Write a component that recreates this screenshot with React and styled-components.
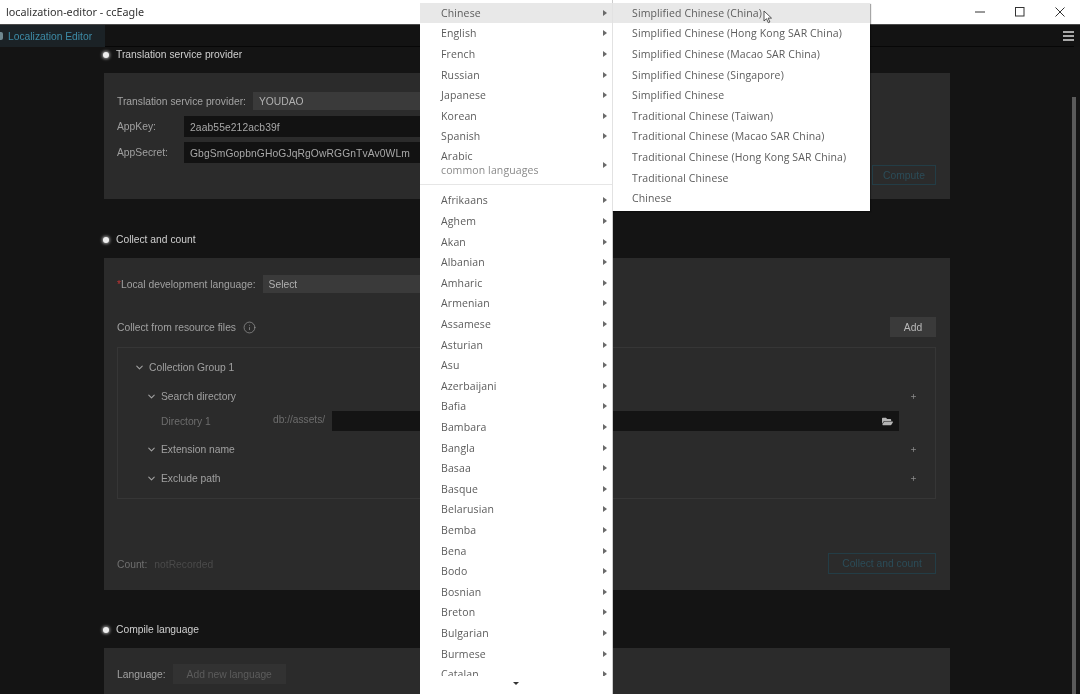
import React from "react";
import styled, { createGlobalStyle } from "styled-components";
import { ChevronDown, Info, Plus as PlusIcon } from "lucide-react";
import { FaFolderOpen } from "react-icons/fa";

const Global = createGlobalStyle`
  html, body { margin: 0; padding: 0; height: 694px; overflow: hidden; background: #141414; }
  * { box-sizing: border-box; }
`;

const Page = styled.div`
  position: relative;
  width: 1080px;
  height: 694px;
  overflow: hidden;
  display: flex;
  flex-direction: column;
  font-family: "Liberation Sans", Arial, sans-serif;
  font-size: 10.3px;
  color: #b4b4b4;
  background: #141414;
  filter: blur(0.45px);
`;

/* ---------- window chrome ---------- */
const TitleBar = styled.header`
  height: 25px;
  flex: none;
  background: #fff;
  display: flex;
  align-items: center;
  justify-content: space-between;
  padding: 0 0 1px 6px;
  border-bottom: 1px solid #4a4a4a;
`;
const TitleText = styled.span`
  font-family: "Noto Sans", sans-serif;
  font-size: 10.8px;
  color: #333;
`;
const WindowControls = styled.div`
  display: flex;
`;
const WindowButton = styled.div`
  width: 40px;
  height: 24px;
  display: flex;
  align-items: center;
  justify-content: center;
  svg { display: block; }
`;
const TabBar = styled.nav`
  height: 22px;
  flex: none;
  display: flex;
  align-items: stretch;
  justify-content: space-between;
  background: #131313;
  padding-right: 6px;
`;
const Tab = styled.div`
  width: 105px;
  padding-left: 8px;
  display: flex;
  align-items: center;
  background: #1b2226;
  color: #3d8ba6;
  white-space: nowrap;
  position: relative;
  &::before {
    content: "";
    position: absolute;
    left: -4px;
    top: 7px;
    width: 7px;
    height: 8px;
    border-radius: 2px;
    background: #6f8890;
  }
`;
const TabRest = styled.div`
  flex: 1;
  display: flex;
  justify-content: flex-end;
  align-items: flex-start;
  padding-top: 6px;
  border-bottom: 1px solid #070707;
`;
const Burger = styled.div`
  width: 11px;
  height: 10px;
  border-top: 2px solid #a8a8a8;
  border-bottom: 2px solid #a8a8a8;
  position: relative;
  &::after {
    content: "";
    position: absolute;
    left: 0; right: 0; top: 2px;
    height: 2px;
    background: #a8a8a8;
  }
`;
const Scrollbar = styled.div`
  position: absolute;
  left: 1072px;
  top: 97px;
  bottom: 0;
  width: 4px;
  background: #5a5a5a;
`;

/* ---------- main ---------- */
const Content = styled.main`
  flex: 1;
  min-height: 0;
  padding: 0 130px 0 104px;
  overflow: hidden;
`;
const SectionHead = styled.h2`
  margin: ${(p) => p.$top}px 0 11px;
  height: 15px;
  padding-top: 1px;
  display: flex;
  align-items: center;
  gap: 7px;
  font-size: 10.3px;
  font-weight: normal;
  line-height: 14px;
  color: #cfcfcf;
  &::before {
    content: "";
    width: 6px;
    height: 6px;
    margin-left: -1px;
    border-radius: 50%;
    background: #eee;
    box-shadow: 0 0 3px 1px rgba(255,255,255,.55);
  }
`;
const Panel = styled.section`
  height: ${(p) => p.$h}px;
  background: #2b2b2b;
  padding: ${(p) => p.$pad || 19}px 14px 0 13px;
`;
const Row = styled.div`
  display: flex;
  align-items: center;
  height: ${(p) => p.$h}px;
  margin-top: ${(p) => p.$mt || 0}px;
`;
const Label = styled.label`
  width: ${(p) => (p.$w ? `${p.$w}px` : "auto")};
  flex: none;
  color: ${(p) => p.$color || "#a0a0a0"};
  white-space: nowrap;
`;
const Req = styled.span`
  color: #b33;
`;
const Select = styled.div`
  width: 300px;
  height: 18px;
  margin-left: ${(p) => p.$ml}px;
  padding-left: 6px;
  background: #3a3a3a;
  color: #b0b0b0;
  display: flex;
  align-items: center;
`;
const Input = styled.div`
  width: 380px;
  height: 21px;
  padding: 1px 0 0 6px;
  background: #121212;
  color: #a8a8a8;
  display: flex;
  align-items: center;
  letter-spacing: .1px;
`;
const RightAction = styled.div`
  display: flex;
  justify-content: flex-end;
  padding-top: 2px;
`;
const GhostButton = styled.button`
  width: ${(p) => p.$w}px;
  height: 20px;
  padding: 0;
  background: transparent;
  border: 1px solid #233d46;
  color: #2b4c58;
  font: inherit;
`;
const SolidButton = styled.button`
  width: 46px;
  height: 20px;
  padding: 0;
  margin-left: auto;
  border: 0;
  background: #3a3a3a;
  color: #b8b8b8;
  font: inherit;
`;
const Help = styled.span`
  margin-left: 7px;
  display: inline-flex;
  color: #a0a0a0;
`;
const Group = styled.div`
  height: 152px;
  margin-top: 10px;
  border: 1px solid #363636;
  padding-top: 12px;
`;
const TreeRow = styled.div`
  display: flex;
  align-items: center;
  height: 14px;
  margin-top: ${(p) => p.$mt || 0}px;
  padding-left: ${(p) => p.$indent}px;
  padding-right: 18px;
  color: #a0a0a0;
  gap: 4px;
  svg { flex: none; color: #a0a0a0; }
`;
const Plus = styled.span`
  margin-left: auto;
  display: inline-flex;
  svg { color: #8f8f8f; }
`;
const DirRow = styled.div`
  display: flex;
  align-items: center;
  height: 20px;
  margin-top: 8px;
  padding-left: 43px;
  color: #6d6d6d;
`;
const DirName = styled.span`
  width: 112px;
  flex: none;
`;
const DirPrefix = styled.span`
  width: 59px;
  flex: none;
  font-size: 10.2px;
  position: relative;
  top: -2px;
`;
const DirInput = styled.div`
  width: 567px;
  height: 20px;
  background: #141414;
  display: flex;
  align-items: center;
  justify-content: flex-end;
  padding-right: 6px;
  color: #b5b5b5;
`;
const CountRow = styled.div`
  display: flex;
  align-items: center;
  height: 21px;
  margin-top: 54px;
  color: #6f6f6f;
`;
const CountText = styled.span`
  padding-top: 2px;
`;
const CountValue = styled(CountText)`
  margin-left: 7px;
  color: #4a4a4a;
`;
const LastButton = styled(GhostButton)`
  height: 21px;
  margin-left: auto;
`;
const AddLang = styled.button`
  width: 113px;
  height: 20px;
  margin-left: 7px;
  border: 0;
  padding: 0;
  background: #323232;
  color: #5c5c5c;
  font: inherit;
`;

/* ---------- context menus ---------- */
const Menu = styled.div`
  position: absolute;
  background: #fff;
  font-family: "Open Sans", sans-serif;
  font-size: 10.5px;
  color: #5c5c5c;
  letter-spacing: .12px;
`;
const MainMenu = styled(Menu)`
  left: 420px;
  top: 0;
  bottom: 0;
  width: 193px;
  padding-top: 2.6px;
  border-right: 1px solid #ccc;
  display: flex;
  flex-direction: column;
`;
const SubMenu = styled(Menu)`
  left: 612px;
  top: 2.6px;
  width: 258px;
  height: 208px;
  border-left: 1px solid #e2e2e2;
  box-shadow: 1px 1px 1px rgba(0,0,0,.35);
`;
const MenuList = styled.div`
  flex: 1;
  min-height: 0;
  overflow: hidden;
`;
const Item = styled.div`
  height: ${(p) => (p.$tall ? 37.4 : 20.6)}px;
  padding-left: ${(p) => p.$pl}px;
  padding-right: 5px;
  display: flex;
  align-items: center;
  justify-content: space-between;
  background: ${(p) => (p.$on ? "#e8e8e8" : "transparent")};
  white-space: nowrap;
  line-height: 14px;
`;
const Arrow = styled.span`
  width: 0;
  height: 0;
  border-left: 4px solid #6a6a6a;
  border-top: 3px solid transparent;
  border-bottom: 3px solid transparent;
`;
const TwoLine = styled.span`
  position: relative;
  top: -2px;
`;
const Muted = styled.span`
  display: block;
  color: #8a8a8a;
`;
const Separator = styled.div`
  height: 1px;
  margin: 0 0 5px;
  background: #e6e6e6;
`;
const ScrollDown = styled.div`
  height: 18px;
  flex: none;
  display: flex;
  justify-content: center;
  padding-top: 6px;
  &::after {
    content: "";
    width: 0;
    height: 0;
    border-top: 3px solid #333;
    border-left: 3px solid transparent;
    border-right: 3px solid transparent;
  }
`;
const Cursor = styled.svg`
  position: absolute;
  left: 763px;
  top: 10px;
`;

const common = ["Chinese", "English", "French", "Russian", "Japanese", "Korean", "Spanish"];
const others = ["Afrikaans", "Aghem", "Akan", "Albanian", "Amharic", "Armenian", "Assamese", "Asturian", "Asu", "Azerbaijani", "Bafia", "Bambara", "Bangla", "Basaa", "Basque", "Belarusian", "Bemba", "Bena", "Bodo", "Bosnian", "Breton", "Bulgarian", "Burmese", "Catalan"];
const variants = ["Simplified Chinese (China)", "Simplified Chinese (Hong Kong SAR China)", "Simplified Chinese (Macao SAR China)", "Simplified Chinese (Singapore)", "Simplified Chinese", "Traditional Chinese (Taiwan)", "Traditional Chinese (Macao SAR China)", "Traditional Chinese (Hong Kong SAR China)", "Traditional Chinese", "Chinese"];

const Chevron = () => <ChevronDown size={11} strokeWidth={2.4} />;
const Add = () => <Plus><PlusIcon size={7} strokeWidth={2.5} /></Plus>;

export default function App() {
  return (
    <Page>
      <Global />
      <TitleBar>
        <TitleText>localization-editor - ccEagle</TitleText>
        <WindowControls>
          <WindowButton>
            <svg width="10" height="10" viewBox="0 0 10 10"><path d="M0 5h10" stroke="#333" strokeWidth="1" /></svg>
          </WindowButton>
          <WindowButton>
            <svg width="10" height="10" viewBox="0 0 10 10"><rect x=".5" y=".5" width="8.5" height="8.5" fill="none" stroke="#333" strokeWidth="1" /></svg>
          </WindowButton>
          <WindowButton>
            <svg width="10" height="10" viewBox="0 0 10 10"><path d="M.5.5l9 9M9.5.5l-9 9" stroke="#333" strokeWidth="1" /></svg>
          </WindowButton>
        </WindowControls>
      </TitleBar>
      <TabBar>
        <Tab>Localization Editor</Tab>
        <TabRest><Burger /></TabRest>
      </TabBar>
      <Content>
        <SectionHead $top={0}>Translation service provider</SectionHead>
        <Panel $h={126}>
          <Row $h={18}>
            <Label $color="#a3a3a3">Translation service provider:</Label>
            <Select $ml={7}>YOUDAO</Select>
          </Row>
          <Row $h={21} $mt={6}>
            <Label $w={67}>AppKey:</Label>
            <Input>2aab55e212acb39f</Input>
          </Row>
          <Row $h={21} $mt={5}>
            <Label $w={67}>AppSecret:</Label>
            <Input>GbgSmGopbnGHoGJqRgOwRGGnTvAv0WLm</Input>
          </Row>
          <RightAction>
            <GhostButton $w={64}>Compute</GhostButton>
          </RightAction>
        </Panel>

        <SectionHead $top={33}>Collect and count</SectionHead>
        <Panel $h={332} $pad={17}>
          <Row $h={18}>
            <Label><Req>*</Req>Local development language:</Label>
            <Select $ml={7}>Select</Select>
          </Row>
          <Row $h={20} $mt={24}>
            <Label>Collect from resource files</Label>
            <Help><Info size={13} strokeWidth={1.2} /></Help>
            <SolidButton>Add</SolidButton>
          </Row>
          <Group>
            <TreeRow $indent={16}><Chevron />Collection Group 1</TreeRow>
            <TreeRow $indent={28} $mt={15}><Chevron />Search directory<Add /></TreeRow>
            <DirRow>
              <DirName>Directory 1</DirName>
              <DirPrefix>db://assets/</DirPrefix>
              <DirInput><FaFolderOpen size={11} /></DirInput>
            </DirRow>
            <TreeRow $indent={28} $mt={11}><Chevron />Extension name<Add /></TreeRow>
            <TreeRow $indent={28} $mt={15}><Chevron />Exclude path<Add /></TreeRow>
          </Group>
          <CountRow>
            <CountText>Count:</CountText>
            <CountValue>notRecorded</CountValue>
            <LastButton $w={108}>Collect and count</LastButton>
          </CountRow>
        </Panel>

        <SectionHead $top={32}>Compile language</SectionHead>
        <Panel $h={46} $pad={16}>
          <Row $h={20}>
            <Label>Language:</Label>
            <AddLang>Add new language</AddLang>
          </Row>
        </Panel>
      </Content>
      <Scrollbar />

      <MainMenu>
        <MenuList>
          {common.map((name, i) => (
            <Item key={name} $pl={21} $on={i === 0}>{name}<Arrow /></Item>
          ))}
          <Item $pl={21} $tall>
            <TwoLine>Arabic<Muted>common languages</Muted></TwoLine>
            <Arrow />
          </Item>
          <Separator />
          {others.map((name) => (
            <Item key={name} $pl={21}>{name}<Arrow /></Item>
          ))}
        </MenuList>
        <ScrollDown />
      </MainMenu>
      <SubMenu>
        {variants.map((name, i) => (
          <Item key={name} $pl={19} $on={i === 0}>{name}</Item>
        ))}
      </SubMenu>
      <Cursor width="10" height="14" viewBox="0 0 10 14">
        <path d="M1 1v10l2.5-2.3 1.8 4 1.6-.7-1.8-3.9H8.5z" fill="#fff" stroke="#444" strokeWidth=".9" />
      </Cursor>
    </Page>
  );
}
